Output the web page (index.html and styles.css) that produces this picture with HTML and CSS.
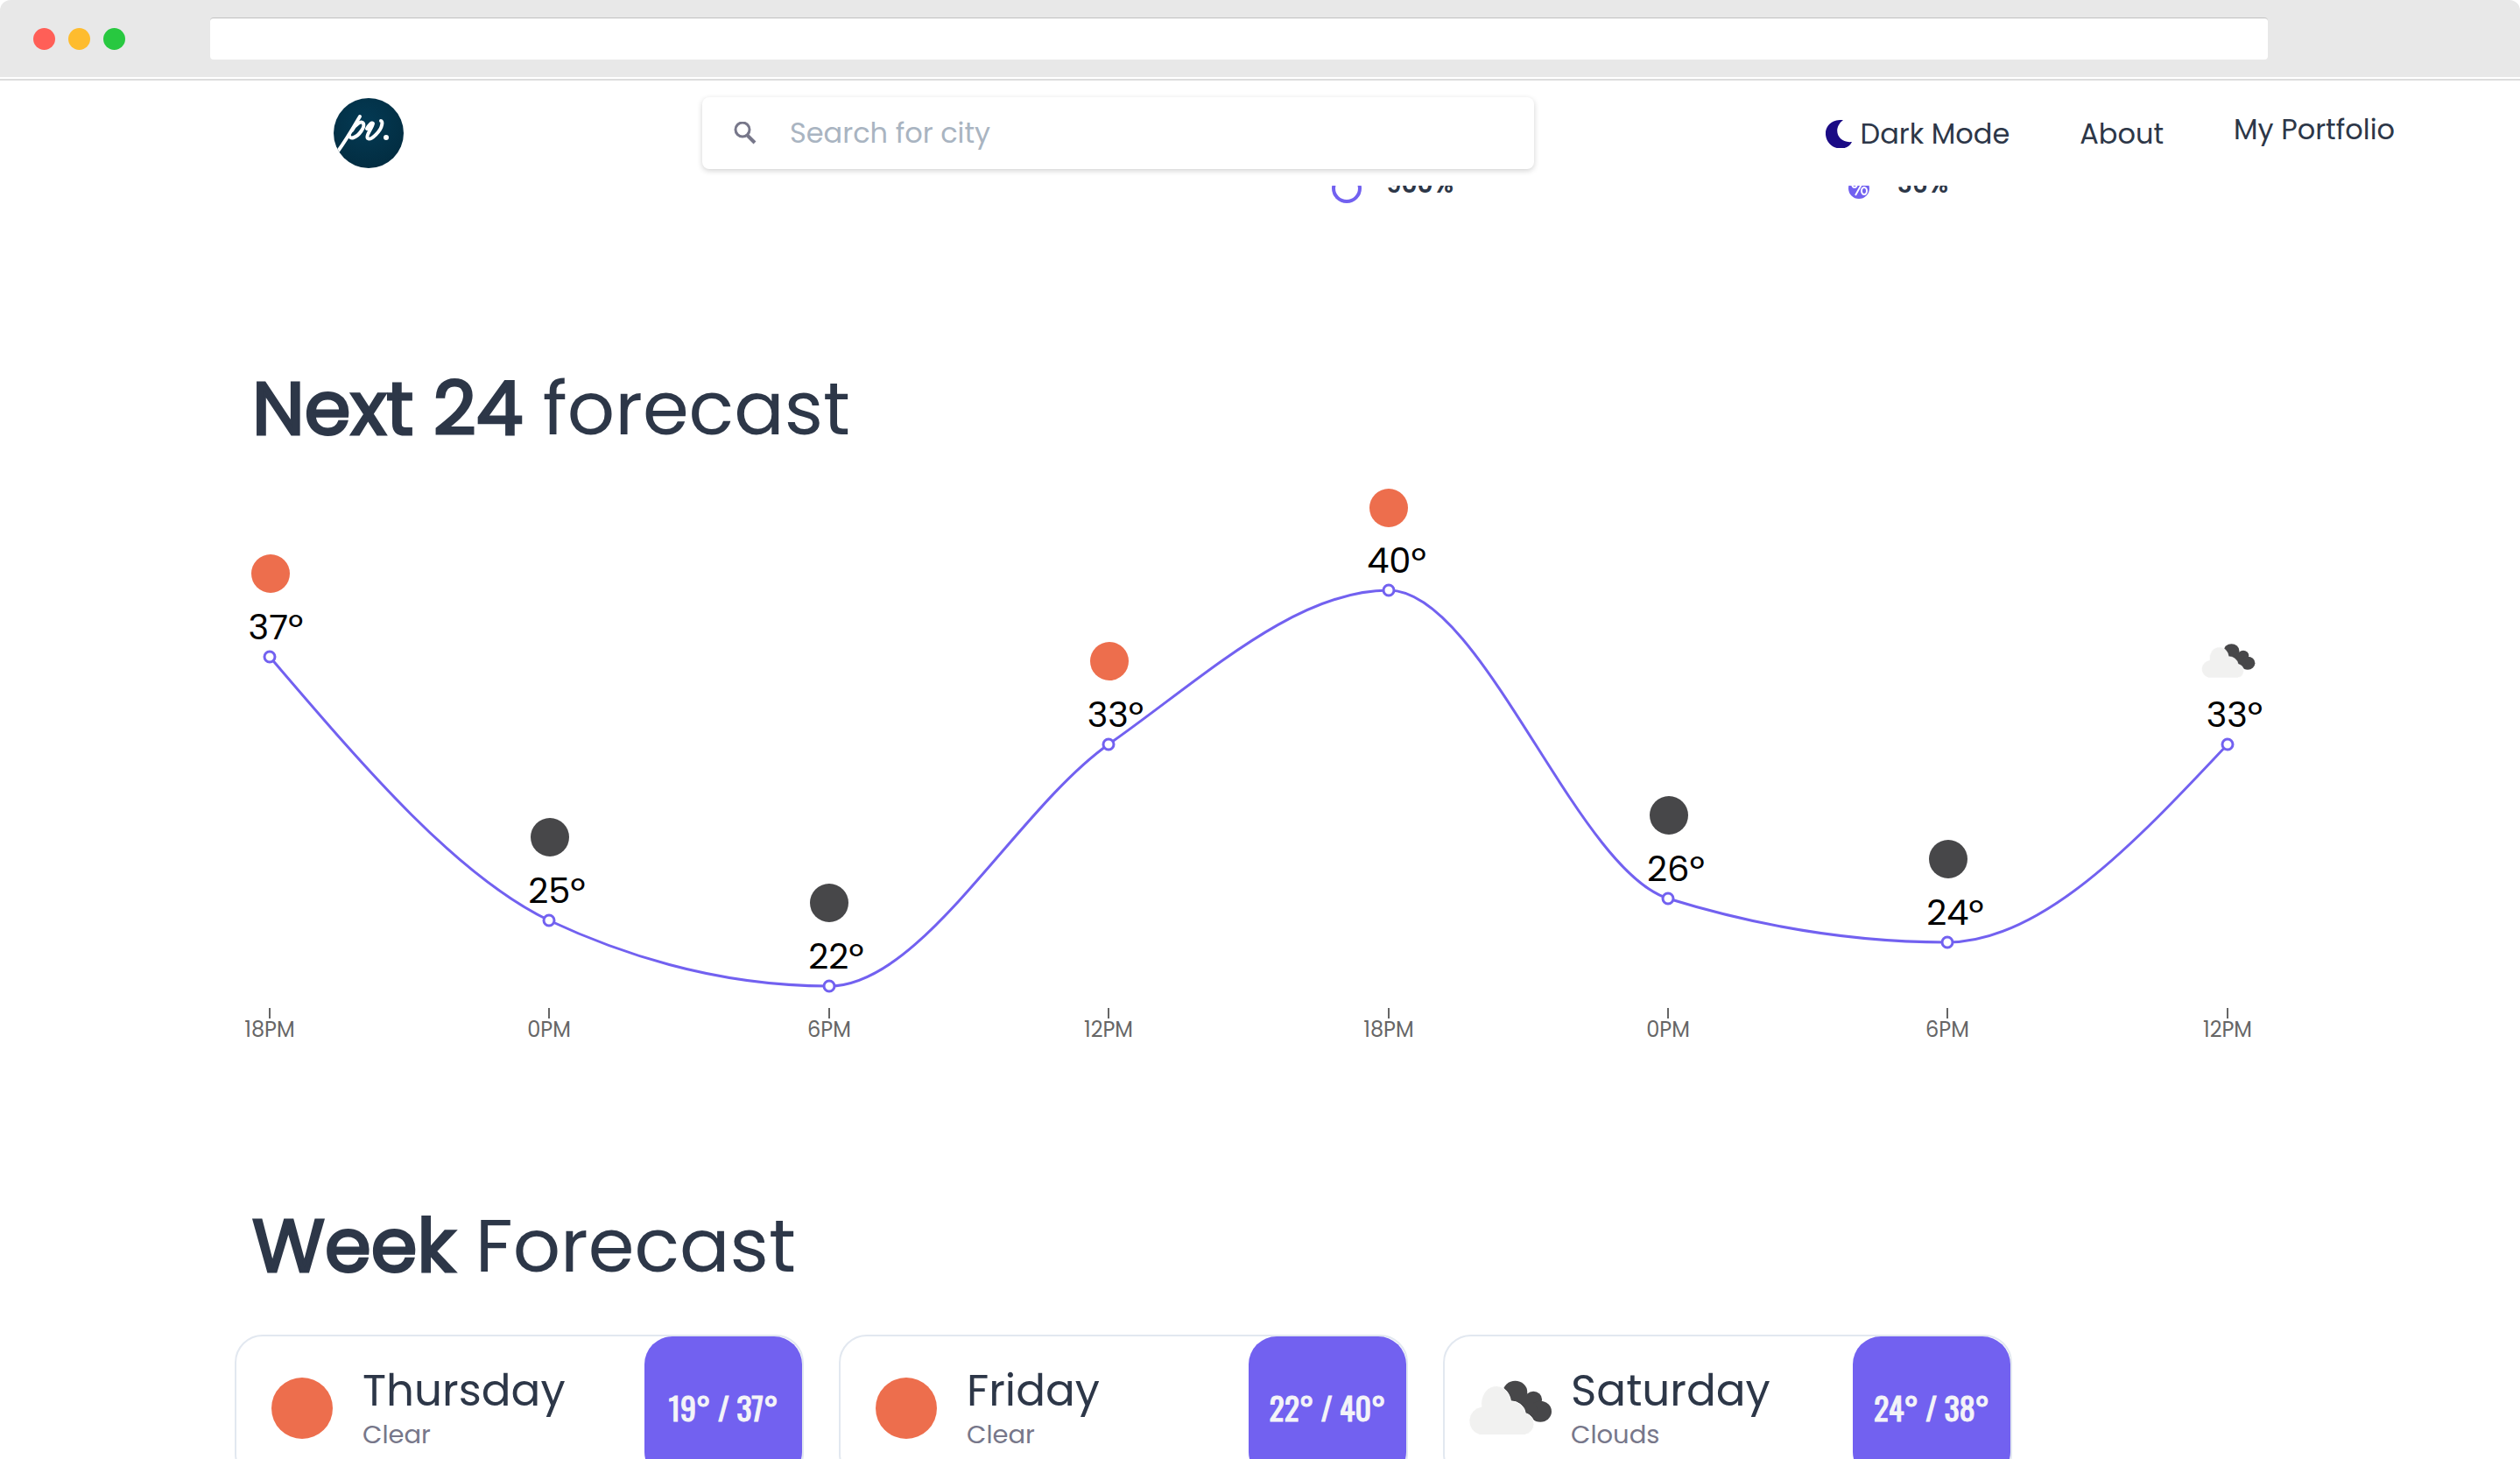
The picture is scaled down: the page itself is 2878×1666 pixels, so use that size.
FILE: index.html
```html
<!DOCTYPE html>
<html lang="en">
<head>
<meta charset="utf-8">
<title>Weather forecast</title>
<link rel="stylesheet" href="styles.css">
</head>
<body>
<div class="window">
  <div class="titlebar">
    <div class="lights">
      <span class="light light-red"></span>
      <span class="light light-yellow"></span>
      <span class="light light-green"></span>
    </div>
    <input class="address" type="text" aria-label="Address">
  </div>

  <header class="header">
    <a class="logo" href="#" aria-label="Home">
      <svg viewBox="0 0 80 80" width="80" height="80" aria-hidden="true">
        <defs>
          <radialGradient id="logo-fill" cx="45%" cy="35%" r="70%">
            <stop offset="0" stop-color="#043a54"/>
            <stop offset="1" stop-color="#022c40"/>
          </radialGradient>
          <clipPath id="logo-clip"><circle cx="40" cy="40" r="40"/></clipPath>
        </defs>
        <circle cx="40" cy="40" r="40" fill="url(#logo-fill)"/>
        <g clip-path="url(#logo-clip)" fill="none" stroke="#fff" stroke-linecap="round" stroke-linejoin="round">
          <path stroke-width="4" d="M30 21C23 33 15 47 4 62"/>
          <path stroke-width="4" d="M21 37C25 30 32 25 34 29C36 33 29 43 23 45C20 46 18 45 18 43"/>
          <path stroke-width="4" d="M38 35C40 31 44 27 45 29C46 31 36 43 39 46C43 49 54 37 55 31C56 28 55 26 54 26"/>
        </g>
        <ellipse cx="60" cy="45" rx="3" ry="3" fill="#fff"/>
      </svg>
    </a>
    <form class="search">
      <svg class="search-icon" viewBox="0 0 26 26" width="26" height="26" aria-hidden="true">
        <circle cx="10" cy="9" r="8" fill="none" stroke="#77778a" stroke-width="3"/>
        <path d="M15 15L24 24" stroke="#77778a" stroke-width="4"/>
      </svg>
      <input class="search-input" type="search" aria-label="Search for city" placeholder="Search for city">
    </form>
    <nav class="nav">
      <button class="theme" type="button">
        <svg viewBox="0 0 32 32" width="32" height="32" aria-hidden="true">
          <path fill="#1b0b85" d="M20 0C4-1-1 10 0 17C2 35 25 37 30 25C14 27 7 10 20 0Z"/>
        </svg>
        Dark Mode
      </button>
      <a class="nav-link" href="#">About</a>
      <a class="nav-link nav-link-raised" href="#">My Portfolio</a>
    </nav>
  </header>

  <main class="main">
    <section class="stats">
      <div class="stat">
        <svg viewBox="0 0 34 46" width="34" height="46" aria-hidden="true">
          <path d="M17 2C11 11 2 20 2 29A15 15 0 0 0 32 29C32 20 23 11 17 2Z" fill="none" stroke="#7261f0" stroke-width="4"/>
        </svg>
        <span>900%</span>
      </div>
      <div class="stat stat-humidity">
        <svg viewBox="0 0 24 39" width="24" height="39" aria-hidden="true">
          <path d="M12 0C8 7 0 14 0 22A12 12 0 0 0 24 22C24 14 16 7 12 0Z" fill="#7261f0"/>
          <g fill="none" stroke="#fff" stroke-width="2"><ellipse cx="7" cy="17" rx="3" ry="4"/><ellipse cx="18" cy="25" rx="3" ry="4"/><path d="M17 14L8 30"/></g>
        </svg>
        <span>36%</span>
      </div>
    </section>

    <section class="section">
      <h2 class="title"><strong>Next 24</strong> forecast</h2>
      <svg class="chart" viewBox="268 540 2342 660" role="img" aria-label="Temperature over the next hours">
        <defs>
          <g id="cloud">
            <g fill="#474749"><circle cx="57" cy="16" r="14"/><circle cx="78" cy="25" r="10"/><circle cx="86" cy="40" r="13"/><path d="M48 22L60 8L82 34L84 52L60 44Z"/></g>
            <path fill="#f1f1f0" stroke="#fff" stroke-width="1" d="M16 69A17 18 0 0 1 18 34A17 22 0 0 1 52 27A17 17 0 0 1 69 42A14 14 0 0 1 68 69Z"/>
          </g>
        </defs>
        <path class="curve" d="M308 749C415 874 521 999 627 1050C734 1100 840 1125 947 1125C1053 1125 1160 924 1266 849C1373 774 1479 673 1586 673C1692 673 1799 991 1905 1025C2012 1058 2118 1075 2224 1075C2331 1075 2438 962 2544 849"/>
        <g class="points">
          <circle cx="308" cy="749" r="6"/><circle cx="627" cy="1050" r="6"/><circle cx="947" cy="1125" r="6"/><circle cx="1266" cy="849" r="6"/><circle cx="1586" cy="673" r="6"/><circle cx="1905" cy="1025" r="6"/><circle cx="2224" cy="1075" r="6"/><circle cx="2544" cy="849" r="6"/>
        </g>
        <g class="sun">
          <circle cx="309" cy="654" r="22"/><circle cx="1267" cy="754" r="22"/><circle cx="1586" cy="579" r="22"/>
        </g>
        <g class="moon">
          <circle cx="628" cy="955" r="22"/><circle cx="947" cy="1030" r="22"/><circle cx="1906" cy="930" r="22"/><circle cx="2225" cy="980" r="22"/>
        </g>
        <use href="#cloud" transform="translate(2512 733) scale(0.64 0.58)"/>
        <g class="degrees">
          <text x="315" y="729">37º</text><text x="636" y="1030">25º</text><text x="955" y="1105">22º</text><text x="1274" y="829">33º</text><text x="1595" y="653">40º</text><text x="1914" y="1005">26º</text><text x="2233" y="1055">24º</text><text x="2552" y="829">33º</text>
        </g>
        <path class="ticks" d="M308 1150v12M627 1150v12M947 1150v12M1266 1150v12M1586 1150v12M1905 1150v12M2224 1150v12M2544 1150v12"/>
        <g class="hours">
          <text x="308" y="1183">18PM</text><text x="627" y="1183">0PM</text><text x="947" y="1183">6PM</text><text x="1266" y="1183">12PM</text><text x="1586" y="1183">18PM</text><text x="1905" y="1183">0PM</text><text x="2224" y="1183">6PM</text><text x="2544" y="1183">12PM</text>
        </g>
      </svg>
    </section>

    <section class="section section-week">
      <h2 class="title"><strong>Week</strong> Forecast</h2>
      <div class="cards">
        <article class="card">
          <svg class="card-icon" viewBox="0 0 100 72" aria-hidden="true"><circle cx="51" cy="36" r="35" fill="#ed6e4d"/></svg>
          <div class="card-text"><h3 class="day">Thursday</h3><p class="sky">Clear</p></div>
          <div class="range">19° / 37°</div>
        </article>
        <article class="card">
          <svg class="card-icon" viewBox="0 0 100 72" aria-hidden="true"><circle cx="51" cy="36" r="35" fill="#ed6e4d"/></svg>
          <div class="card-text"><h3 class="day">Friday</h3><p class="sky">Clear</p></div>
          <div class="range">22° / 40°</div>
        </article>
        <article class="card">
          <svg class="card-icon" viewBox="0 0 100 72" aria-hidden="true"><use href="#cloud" transform="translate(0 3) scale(0.99 0.92)"/></svg>
          <div class="card-text"><h3 class="day">Saturday</h3><p class="sky">Clouds</p></div>
          <div class="range">24° / 38°</div>
        </article>
      </div>
    </section>
  </main>
</div>
</body>
</html>
```

FILE: styles.css
```css
* { box-sizing: border-box; }

body {
  margin: 0;
  background: #fff;
  color: #2d3748;
  font-family: Poppins, Inter, "Open Sans", sans-serif;
}

h2, h3, p { margin: 0; font-weight: 400; }
svg { display: block; }

.window {
  height: 100vh;
  overflow: hidden;
  border-radius: 12px;
  background: #fff;
}

/* Browser title bar */
.titlebar {
  display: flex;
  align-items: center;
  height: 92px;
  padding: 0 288px 4px 38px;
  background: linear-gradient(#e8e8e8 88px, #fff 88px, #fff 90px, #dcdcdc 90px);
}
.lights { display: flex; gap: 15px; width: 202px; }
.light { width: 25px; height: 25px; border-radius: 50%; }
.light-red { background: #ff5f57; }
.light-yellow { background: #febc2e; }
.light-green { background: #28c840; }
.address {
  flex: 1;
  height: 48px;
  padding: 0 16px;
  border: 0;
  border-top: 1px solid #c0c0c0;
  border-radius: 4px;
  background: #fff;
  font-size: 24px;
}

.header {
  position: relative;
  display: flex;
  align-items: center;
  height: 120px;
  padding: 0 143px 0 381px;
  background: #fff;
}
.search {
  display: flex;
  align-items: center;
  width: 950px;
  height: 82px;
  margin-left: 341px;
  padding: 0 36px;
  border-radius: 8px;
  box-shadow: 0 2px 6px rgba(0, 0, 0, 0.18);
}
.search-input {
  flex: 1;
  margin-left: 38px;
  padding: 0;
  border: 0;
  background: none;
  font: inherit;
  font-size: 32px;
}
.search-input::placeholder { color: #a9b4c1; opacity: 1; }
.nav {
  display: flex;
  flex: 1;
  align-items: center;
  justify-content: flex-end;
  gap: 80px;
  padding-top: 2px;
  font-size: 32px;
}
.theme {
  display: flex;
  align-items: center;
  gap: 8px;
  padding: 0;
  border: 0;
  background: none;
  color: inherit;
  font: inherit;
}
.nav-link { color: inherit; text-decoration: none; }
.nav-link-raised { padding-bottom: 10px; }

.main { padding: 0 268px; }

/* Current conditions, scrolled partly under the header */
.stats {
  display: grid;
  grid-template-columns: 590px 1fr;
  height: 40px;
  margin-top: -20px;
  padding-left: 1253px;
}
.stat {
  display: flex;
  align-items: flex-end;
  height: 40px;
  gap: 28px;
  font-size: 28px;
  font-weight: 600;
}
.stat-humidity { gap: 32px; }

.section { padding-top: 175px; }
.section-week { padding-top: 162px; }
.title { padding-left: 20px; font-size: 85px; line-height: 120px; }
.title strong { font-weight: 400; -webkit-text-stroke: 3px currentColor; }

/* Temperature chart */
.chart { width: 100%; height: auto; margin-top: 14px; }
.curve { fill: none; stroke: #7261f0; stroke-width: 3; }
.points { fill: #fff; stroke: #7261f0; stroke-width: 3; }
.sun { fill: #ed6e4d; }
.moon { fill: #474749; }
.degrees { font-size: 40px; text-anchor: middle; fill: #000; }
.ticks { stroke: #666; stroke-width: 2; }
.hours { font-size: 24px; text-anchor: middle; fill: #666; }

/* Week cards */
.cards { display: flex; gap: 40px; margin-top: 41px; }
.card {
  display: flex;
  flex: 0 1 650px;
  align-items: center;
  height: 168px;
  padding-left: 24px;
  border: 2px solid #e2e8f0;
  border-radius: 32px;
}
.card-icon { width: 100px; height: 72px; }
.card-text { flex: 1; padding-left: 20px; }
.day { font-size: 50px; line-height: 60px; }
.sky { color: #77778a; font-size: 29px; line-height: 40px; }
.range {
  display: flex;
  align-items: center;
  justify-content: center;
  align-self: stretch;
  width: 180px;
  padding-bottom: 4px;
  border-radius: 32px;
  background: #7261f0;
  color: #f4f4f8;
  font-family: Oswald, "Liberation Sans Narrow", sans-serif;
  font-size: 36px;
  font-weight: 400;
  -webkit-text-stroke: 1px currentColor;
}
```
